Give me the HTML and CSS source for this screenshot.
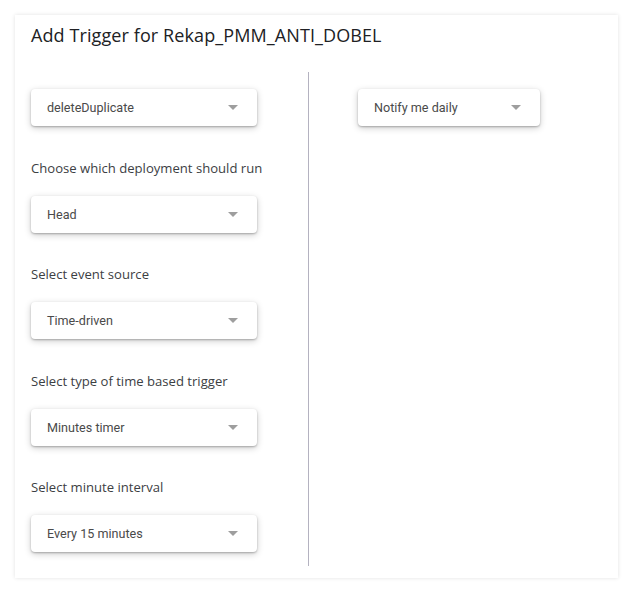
FILE: index.html
```html
<!DOCTYPE html>
<html>
<head>
<meta charset="utf-8">
<link rel="stylesheet" href="styles.css">
</head>
<body>
<div class="card">
  <h1 class="title">Add Trigger for Rekap_PMM_ANTI_DOBEL</h1>
  <div class="body">
    <div class="col-left">
      <div class="select"><span>deleteDuplicate</span><i class="arrow"></i></div>
      <div class="label">Choose which deployment should run</div>
      <div class="select"><span>Head</span><i class="arrow"></i></div>
      <div class="label">Select event source</div>
      <div class="select"><span>Time-driven</span><i class="arrow"></i></div>
      <div class="label">Select type of time based trigger</div>
      <div class="select"><span>Minutes timer</span><i class="arrow"></i></div>
      <div class="label">Select minute interval</div>
      <div class="select"><span>Every 15 minutes</span><i class="arrow"></i></div>
    </div>
    <div class="divider"></div>
    <div class="col-right">
      <div class="select narrow"><span>Notify me daily</span><i class="arrow"></i></div>
    </div>
  </div>
</div>
</body>
</html>
```
FILE: styles.css
```css
html, body {
  margin: 0;
  padding: 0;
  background: #fff;
}
body {
  padding: 15px;
  font-family: Roboto, "Liberation Sans", sans-serif;
}
.card {
  width: 603px;
  height: 563px;
  box-sizing: border-box;
  background: #fff;
  box-shadow: 0 0 4px rgba(0,0,0,0.12);
  padding: 0 0 12px 16px;
  display: flex;
  flex-direction: column;
}
.title {
  margin: 0;
  padding-top: 8px;
  height: 57px;
  box-sizing: border-box;
  font-family: "Open Sans", Roboto, sans-serif;
  font-weight: 400;
  font-size: 18px;
  line-height: 24px;
  color: #202124;
  letter-spacing: 0.1px;
}
.body {
  flex: 1;
  display: flex;
}
.col-left {
  width: 277px;
  padding-top: 17px;
  display: flex;
  flex-direction: column;
}
.divider {
  width: 1px;
  background: #b4b2c0;
}
.col-right {
  padding-left: 49px;
  padding-top: 17px;
}
.select {
  width: 226px;
  height: 37px;
  flex: none;
  box-sizing: border-box;
  border-radius: 4px;
  background: #fff;
  box-shadow: 0 1px 2px rgba(0,0,0,0.25), 0 2px 7px rgba(0,0,0,0.2);
  display: flex;
  align-items: center;
  justify-content: space-between;
  padding: 0 19px 0 16px;
  font-size: 12.6px;
  color: #4a4a4a;
}
.select.narrow {
  width: 182px;
}
.arrow {
  width: 0;
  height: 0;
  border-left: 5px solid transparent;
  border-right: 5px solid transparent;
  border-top: 5px solid #9e9e9e;
}
.label {
  margin-top: 31.5px;
  margin-bottom: 18px;
  line-height: 20px;
  font-family: "Open Sans", Roboto, sans-serif;
  font-size: 13.1px;
  color: #3c4043;
}
```
